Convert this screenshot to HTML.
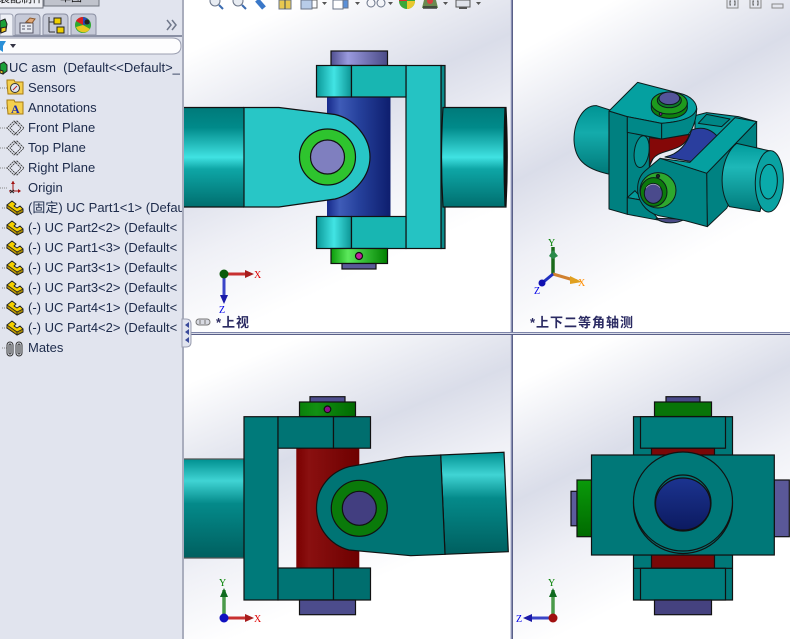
<!DOCTYPE html>
<html><head><meta charset="utf-8"><style>
html,body{margin:0;padding:0;width:790px;height:639px;overflow:hidden;background:#fff}
svg{display:block}
.t{font-family:"Liberation Sans","Noto Sans CJK SC",sans-serif;font-size:13px;fill:#1c2a4a}
.v{font-family:"Liberation Sans","Noto Sans CJK SC",sans-serif;font-size:13px;font-weight:700;fill:#2a2a62;letter-spacing:1px}
.a{font-family:"Liberation Serif",serif;font-size:10px}
</style></head><body>
<svg width="790" height="639" viewBox="0 0 790 639" xmlns="http://www.w3.org/2000/svg">
<defs>
<linearGradient id="bg" x1="0.1" y1="0" x2="0.55" y2="1"><stop offset="0.1" stop-color="#fff"/><stop offset="0.42" stop-color="#dadde9"/><stop offset="0.62" stop-color="#eff0f6"/><stop offset="0.85" stop-color="#fff"/></linearGradient>
<linearGradient id="cylH" x1="0" y1="0" x2="0" y2="1"><stop offset="0" stop-color="#007a7a"/><stop offset="0.2" stop-color="#008a8a"/><stop offset="0.5" stop-color="#40e2e2"/><stop offset="0.62" stop-color="#0ea6a6"/><stop offset="1" stop-color="#006e6e"/></linearGradient>
<linearGradient id="cylL" x1="0" y1="0" x2="0" y2="1"><stop offset="0" stop-color="#009090"/><stop offset="0.22" stop-color="#40d4d4"/><stop offset="0.45" stop-color="#048a8a"/><stop offset="1" stop-color="#005f5f"/></linearGradient>
<linearGradient id="armT" x1="0" y1="0" x2="1" y2="0"><stop offset="0" stop-color="#0a9898"/><stop offset="0.5" stop-color="#42e4e4"/><stop offset="1" stop-color="#0c9494"/></linearGradient>
<linearGradient id="blue" x1="0" y1="0" x2="1" y2="0"><stop offset="0" stop-color="#16298a"/><stop offset="0.2" stop-color="#3f5cb8"/><stop offset="0.5" stop-color="#26419c"/><stop offset="1" stop-color="#0e1e6e"/></linearGradient>
<linearGradient id="purp" x1="0" y1="0" x2="1" y2="0"><stop offset="0" stop-color="#4f4e8e"/><stop offset="0.3" stop-color="#9a9ade"/><stop offset="1" stop-color="#4a4a86"/></linearGradient>
<linearGradient id="grn" x1="0" y1="0" x2="1" y2="0"><stop offset="0" stop-color="#0a9a0a"/><stop offset="0.3" stop-color="#5ce85c"/><stop offset="1" stop-color="#008000"/></linearGradient>
<linearGradient id="grnD" x1="0" y1="0" x2="1" y2="0"><stop offset="0" stop-color="#0a800a"/><stop offset="0.3" stop-color="#129012"/><stop offset="1" stop-color="#006a00"/></linearGradient>
<linearGradient id="red" x1="0" y1="0" x2="1" y2="0"><stop offset="0" stop-color="#7a0000"/><stop offset="0.2" stop-color="#8a1010"/><stop offset="1" stop-color="#6e0000"/></linearGradient>
<linearGradient id="ball" x1="0" y1="0" x2="0" y2="1"><stop offset="0" stop-color="#1c3490"/><stop offset="1" stop-color="#0c1a60"/></linearGradient>
<linearGradient id="shaftR" x1="0" y1="0" x2="0" y2="1"><stop offset="0" stop-color="#009a9a"/><stop offset="0.35" stop-color="#1eb8b8"/><stop offset="1" stop-color="#007a7a"/></linearGradient>
<linearGradient id="shaftL" x1="0" y1="0" x2="0" y2="1"><stop offset="0" stop-color="#009494"/><stop offset="0.4" stop-color="#14abab"/><stop offset="1" stop-color="#007878"/></linearGradient>
<linearGradient id="gl" x1="0" y1="0" x2="0" y2="1"><stop offset="0" stop-color="#0a9a0a"/><stop offset="1" stop-color="#006a00"/></linearGradient>
<g id="part"><path d="M1 5 6 1 10 4 8 6 11 8 14 6 17 9 17 12 11 15 1 8Z" fill="#f4d000" stroke="#222" stroke-width="1" stroke-linejoin="round"/><path d="M1 5 11 12 11 15 1 8Z" fill="#c8a000" stroke="#222" stroke-width=".8"/><path d="M11 12 17 9 17 12 11 15Z" fill="#a88800" stroke="#222" stroke-width=".8"/></g>
<g id="plane"><path d="M8 0 15 7 8 14 1 7Z M5 0 12 7 5 14 -2 7Z" transform="translate(2 0)" fill="none" stroke="#333" stroke-width=".8" stroke-dasharray="2 .6"/></g>
</defs>

<!-- view backgrounds -->
<rect x="184" y="0" width="327" height="332" fill="url(#bg)"/>
<rect x="513" y="0" width="277" height="332" fill="url(#bg)"/>
<rect x="184" y="335" width="327" height="304" fill="url(#bg)"/>
<rect x="513" y="335" width="277" height="304" fill="url(#bg)"/>

<!-- splitters -->
<rect x="511" y="0" width="1" height="639" fill="#8a90b4"/><rect x="512" y="0" width="1" height="639" fill="#5a6088"/>
<rect x="510" y="0" width="1" height="639" fill="#d0d3e2"/>
<rect x="184" y="332" width="606" height="1" fill="#7f86aa"/><rect x="184" y="333" width="606" height="1" fill="#d8dbe8"/><rect x="184" y="334" width="606" height="1" fill="#5a6088"/>

<!-- toolbar icons -->
<g fill="none" stroke="#6a7488" stroke-width="1">
<circle cx="215" cy="1" r="5" fill="#e8ecf2"/><path d="M219 5 223 9" stroke="#3c6cb0" stroke-width="2"/>
<circle cx="238" cy="1" r="5" fill="#e8ecf2"/><path d="M242 5 246 9" stroke="#3c6cb0" stroke-width="2"/>
<path d="M257 0 264 8" stroke="#3a78c8" stroke-width="5"/>
<rect x="279" y="0" width="12" height="9" fill="#e8c850"/><path d="M285 0V9" stroke="#345"/>
<rect x="301" y="0" width="11" height="9" fill="#b8cce8"/><path d="M312 0h5v8h-5" stroke="#666"/>
<rect x="333" y="0" width="10" height="9" fill="#fff"/><rect x="343" y="0" width="5" height="8" fill="#5a90d8"/>
<circle cx="371" cy="3" r="4"/><circle cx="381" cy="3" r="4"/>
</g>
<circle cx="407" cy="1" r="8" fill="#3aa83a"/><path d="M407 1 399 1A8 8 0 0 1 407-7Z" fill="#d83030"/><path d="M407 1V9A8 8 0 0 0 415 1Z" fill="#e8c830"/>
<path d="M424 0h12l2 8h-16Z" fill="#6a8a50"/><path d="M423 6h14v3h-14Z" fill="#333" opacity=".7"/><circle cx="430" cy="1" r="3" fill="#d84040"/>
<rect x="456" y="0" width="14" height="7" fill="#dfe2ea" stroke="#555"/><path d="M459 8h8" stroke="#555" stroke-width="2"/>
<g fill="#555"><path d="M322 2h5l-2.500 3Z"/><path d="M355 2h5l-2.500 3Z"/><path d="M388 2h5l-2.500 3Z"/><path d="M443 2h5l-2.500 3Z"/><path d="M476 2h5l-2.500 3Z"/></g>
<g fill="#e4e6ee" stroke="#888"><rect x="727" y="-2" width="11" height="10"/><rect x="750" y="-2" width="11" height="10"/><rect x="772" y="4" width="11" height="4"/></g>
<path d="M731 1h-1v4h1M734 1h1v4h-1M754 1h-1v4h1M757 1h1v4h-1" stroke="#555" fill="none"/>

<!-- TOP VIEW -->
<g stroke="#111" stroke-width="1.2">
<rect x="331" y="51" width="56.500" height="14.500" fill="url(#purp)"/>
<rect x="327" y="97" width="63.500" height="119.500" fill="url(#blue)" stroke="none"/>
<rect x="184" y="107.500" width="60" height="99.500" fill="url(#cylH)" stroke="none"/><path d="M184 107.500H244M184 207H244" fill="none"/>
<rect x="441" y="65.500" width="4" height="183" fill="#0a8a8a"/>
<path d="M443 107.500H506Q508.500 157 506 207H443Q440 157 443 107.500Z" fill="url(#cylH)"/>
<path d="M505 108Q503 157 505 206Q508 157 505 108Z" fill="#111"/>
<rect x="406" y="65.500" width="35" height="183" fill="#25c3c3"/>
<rect x="316.500" y="65.500" width="35" height="31.500" fill="url(#armT)"/><rect x="351.500" y="65.500" width="54.500" height="31.500" fill="#18b6b2"/>
<rect x="316.500" y="216.500" width="35" height="32" fill="url(#armT)"/><rect x="351.500" y="216.500" width="54.500" height="32" fill="#18b6b2"/>
<path d="M244 107.500H279L335 114.500C355 119 370 138 370 157C370 176 355 194 335 199L279 207H244Z" fill="#28c6c6"/>
<circle cx="327.500" cy="157" r="28" fill="#2ec42e"/><circle cx="327.500" cy="157" r="17" fill="#7f7fbf"/>
<rect x="331" y="248.500" width="56.500" height="15" fill="url(#grn)"/>
<circle cx="359" cy="256" r="3.500" fill="#c020a0"/>
<rect x="342" y="263.500" width="34" height="5.500" fill="#5a5a98"/>
</g>
<!-- triad top -->
<path d="M224 274H250" stroke="#c83030" stroke-width="3"/><path d="M245 270 254 274 245 278Z" fill="#a81c1c"/>
<path d="M224 274V298" stroke="#3a44c8" stroke-width="3"/><path d="M220 295 224 304 228 295Z" fill="#1a1aa8"/>
<circle cx="224" cy="274" r="4.500" fill="#0a5a0a"/>
<text x="254" y="278" class="a" fill="#e00000">X</text><text x="219" y="313" class="a" fill="#0000e8">Z</text>
<text x="216" y="327" class="v">*上视</text>
<rect x="196" y="319" width="14" height="6" rx="3" fill="#d8dae2" stroke="#777"/><path d="M200 320v4M205 320v4" stroke="#777"/>

<!-- ISO VIEW -->
<g transform="translate(570 75) scale(.3333)" stroke="#0c1c1c" stroke-width="3" stroke-linejoin="round">
<!-- left shaft -->
<path d="M120 105 80 92C40 90 12 140 12 195C14 250 40 282 120 298Z" fill="url(#shaftL)"/>
<!-- far arm of right yoke -->
<path d="M375 122 410 113 505 125 560 140 540 200 430 290 375 250Z" fill="#05989a"/>
<path d="M385 145 410 118 480 132 455 155Z" fill="#008686"/>
<!-- interior of left yoke -->
<path d="M172 125 275 145 275 195 240 270 215 375 172 368Z" fill="#008484"/>
<ellipse cx="215" cy="230" rx="22" ry="48" transform="rotate(8 215 230)" fill="#059494"/>
<!-- blue and red -->
<path d="M285 246C325 238 352 208 365 165C400 152 430 165 448 192L378 262Z" fill="#2a3e9e"/>
<path d="M238 188 275 192 358 178C345 225 295 222 265 238C250 246 242 258 238 274Z" fill="#840808"/>
<!-- left front plate -->
<path d="M117 108 172 125 172 418 117 402Z" fill="#008080"/>
<!-- top surface of left yoke -->
<path d="M117 108 203 22 330 55C365 63 382 85 380 105C376 125 350 138 275 145L172 125Z" fill="#05a0a0"/>
<!-- top arm front + tongue side -->
<path d="M172 125 275 145 275 192 172 172Z" fill="#008888"/>
<path d="M275 145C340 140 376 125 380 100C380 130 368 165 355 178L275 192Z" fill="#008888"/>
<!-- bottom arm of left yoke -->
<path d="M172 368 195 347 220 376Z" fill="#059a9a"/>
<path d="M172 368 218 376 268 436 172 418Z" fill="#008484"/>
<!-- bottom pin -->
<path d="M258 430C280 448 320 448 345 432Z" fill="#4a4a86"/>
<!-- right block -->
<path d="M410 295 560 140 560 230 470 400 412 455Z" fill="#008282"/>
<path d="M270 250 360 262 495 128 560 140 410 295Z" fill="#05a0a0"/>
<path d="M232 282 270 250 410 295 412 455 345 437 265 422C225 410 200 375 203 335C205 310 215 295 232 282Z" fill="#008484"/>
<!-- lower green collar -->
<ellipse cx="264" cy="346" rx="54" ry="53" fill="#2ea82e"/>
<ellipse cx="251" cy="351" rx="40" ry="43" fill="#0c7a0c"/>
<ellipse cx="250" cy="355" rx="27" ry="30" fill="#4a4a8c"/>
<path d="M228 340A27 30 0 0 1 270 338" fill="none" stroke="#aab" stroke-width="2"/>
<circle cx="264" cy="303" r="5" fill="#222"/>
<!-- upper green collar -->
<path d="M244 84V100C246 118 272 130 298 130C325 130 350 118 352 100V84Z" fill="#0e800e"/>
<ellipse cx="298" cy="84" rx="54" ry="33" fill="#1d9a1d"/>
<ellipse cx="298" cy="76" rx="36" ry="22" fill="#0f7a2a"/>
<ellipse cx="298" cy="70" rx="31" ry="19" fill="#54549a"/>
<circle cx="272" cy="117" r="4" fill="#a020a0"/>
<!-- right shaft -->
<path d="M500 205C455 240 440 340 478 395L570 410 610 230Z" fill="url(#shaftR)"/>
<ellipse cx="598" cy="319" rx="42" ry="92" transform="rotate(2 598 319)" fill="#0aa2a2"/>
<ellipse cx="596" cy="320" rx="26" ry="52" transform="rotate(2 596 320)" fill="#0aaaaa"/>
</g>
<!-- triad iso -->
<path d="M553 275V247" stroke="#1a6a1a" stroke-width="3.500"/><path d="M549 256 553 250 558 256 553 259Z" fill="#2a8a4a"/>
<path d="M553 274 577 281" stroke="#d08030" stroke-width="3"/><path d="M570 276 582 282 570 284Z" fill="#e0a020"/>
<path d="M553 274 541 284" stroke="#2030c0" stroke-width="3"/><circle cx="542" cy="283" r="3.500" fill="#1010b0"/>
<text x="548" y="246" class="a" fill="#008000">Y</text><text x="578" y="286" class="a" fill="#ff8c00">X</text><text x="534" y="294" class="a" fill="#0000e8">Z</text>
<text x="530" y="327" class="v" style="letter-spacing:1px">*上下二等角轴测</text>

<!-- FRONT VIEW -->
<g stroke="#111" stroke-width="1.200">
<rect x="310" y="396.700" width="35" height="5.500" fill="#4e4e8e"/>
<rect x="299.500" y="402" width="56" height="14.500" fill="url(#grnD)"/>
<circle cx="327.500" cy="409.300" r="3.300" fill="#8a108a"/>
<rect x="296.300" y="448" width="63" height="120" fill="url(#red)" stroke="none"/>
<rect x="184" y="459" width="60" height="99" fill="url(#cylL)" stroke="none"/><path d="M184 459H244M184 558H244" fill="none" stroke="#555"/>
<rect x="244" y="416.700" width="34" height="183.300" fill="#007a7a"/>
<rect x="278" y="416.700" width="55.500" height="31.500" fill="#007474"/><rect x="333.500" y="416.700" width="37" height="31.500" fill="#006e6e"/>
<rect x="278" y="568" width="55.500" height="32" fill="#007474"/><rect x="333.500" y="568" width="37" height="32" fill="#006e6e"/>
<rect x="299.500" y="600" width="56" height="14.700" fill="#4c4c8c"/>
<path d="M440.700 455 504 452.300 508.300 551.700 445 554.300Z" fill="url(#cylL)"/>
<path d="M349 466.700 405.700 456.700 440.700 455 445 554.300 410.700 555.700 349 550C330 545 316.500 528 316.500 508C316.500 488 330 472 349 466.700Z" fill="#007474"/>
<circle cx="359.300" cy="508.300" r="28" fill="#0a7a0a"/><circle cx="359.300" cy="508.300" r="17" fill="#423e80"/>
</g>
<!-- triad front -->
<path d="M224 617V590" stroke="#4a9a4a" stroke-width="3.500"/><path d="M220 597 224 588 228 597Z" fill="#0f6a1f"/>
<path d="M224 618H250" stroke="#c83030" stroke-width="3"/><path d="M245 614 254 618 245 622Z" fill="#a81c1c"/>
<circle cx="224" cy="618" r="4.500" fill="#1010c0"/>
<text x="219" y="586" class="a" fill="#008000">Y</text><text x="254" y="622" class="a" fill="#e00000">X</text>

<!-- RIGHT VIEW -->
<g stroke="#111" stroke-width="1.200">
<rect x="666" y="396.700" width="34" height="5.500" fill="#4a4a8a"/>
<rect x="654.500" y="402" width="57" height="14.500" fill="#087408"/>
<rect x="633.500" y="416.700" width="99" height="38.500" fill="#007878"/>
<rect x="640.500" y="416.700" width="85" height="31.500" fill="#007c7c"/>
<rect x="651.500" y="448.300" width="63" height="7" fill="#7a0808"/>
<rect x="633.500" y="555" width="99" height="45" fill="#007878"/>
<rect x="651.500" y="555" width="63" height="13.300" fill="#7a0808"/>
<path d="M633.500 568.300H732.500" fill="none"/>
<rect x="640.500" y="568.300" width="85" height="31.700" fill="#007c7c"/>
<rect x="654.500" y="600" width="57" height="14.700" fill="#45427f"/>
<rect x="571" y="491.300" width="6" height="34.500" fill="#5c5c9c"/>
<rect x="577" y="480" width="14.500" height="56.700" fill="url(#gl)"/>
<rect x="774.300" y="480" width="15" height="56.700" fill="#5a5898"/>
<rect x="591.500" y="455" width="182.800" height="100" fill="#007878"/>
<ellipse cx="683" cy="503.500" rx="49.500" ry="50" fill="none"/>
<ellipse cx="683" cy="501.500" rx="49.500" ry="49.500" fill="#007878"/>
<circle cx="683" cy="503" r="28" fill="#007878"/>
<ellipse cx="683" cy="504" rx="27.500" ry="26" fill="url(#ball)"/>
</g>
<!-- triad right -->
<path d="M553 617V590" stroke="#4a9a4a" stroke-width="3.500"/><path d="M549 597 553 588 557 597Z" fill="#0f6a1f"/>
<path d="M553 618H527" stroke="#3a44c8" stroke-width="3"/><path d="M532 614 523 618 532 622Z" fill="#1a1aa8"/>
<circle cx="553" cy="618" r="4.500" fill="#a01010"/>
<text x="548" y="586" class="a" fill="#008000">Y</text><text x="516" y="622" class="a" fill="#0000e8">Z</text>

<!-- LEFT PANEL -->
<rect x="0" y="0" width="182" height="639" fill="#e1e4ee"/>
<rect x="182" y="0" width="2" height="639" fill="#a9adbd"/>
<!-- sash handle -->
<path d="M182 319H186Q191 319 191 324V342Q191 347 186 347H182Z" fill="#e1e4ee" stroke="#9a9eb0"/>
<path d="M189 322 185 325 189 328ZM189 329 185 332 189 335ZM189 337 185 340 189 343Z" fill="#3a4a9a"/>
<!-- top tabs -->
<rect x="-2" y="-6" width="45" height="14" fill="#eff0f5" stroke="#70747e"/>
<rect x="44" y="-6" width="55" height="12" fill="#c0c3cc" stroke="#70747e"/>
<text x="-1" y="2" font-family="'Noto Sans CJK SC',sans-serif" font-size="11" fill="#111">装配制件</text>
<text x="60" y="1" font-family="'Noto Sans CJK SC',sans-serif" font-size="11" fill="#111">草图</text>
<!-- icon tabs -->
<rect x="0" y="35" width="182" height="2" fill="#8a90a4"/>
<path d="M0 14H10Q13 14 13 17V36H0Z" fill="#eef0f6" stroke="#9ba0b2"/>
<path d="M15 35V18Q15 14 19 14H36Q40 14 40 18V35Z" fill="#c6cad8" stroke="#8a8fa2"/>
<path d="M43 35V18Q43 14 47 14H64Q68 14 68 18V35Z" fill="#c6cad8" stroke="#8a8fa2"/>
<path d="M71 35V18Q71 14 75 14H92Q96 14 96 18V35Z" fill="#c6cad8" stroke="#8a8fa2"/>
<path d="M0 21 5 19 7 24 6 30 0 32Z" fill="#1aa03a" stroke="#222"/><path d="M1 28 6 27 6 31 1 33Z" fill="#f0c820" stroke="#222"/>
<rect x="20" y="23" width="13" height="10" fill="#e8ebf2" stroke="#556"/><path d="M22 26h3M27 26h4M22 29h3M27 29h4" stroke="#556"/><path d="M26 22 30 18 35 19 32 23Z" fill="#e0a878" stroke="#8a5a30"/>
<path d="M49 17V32M49 22H54M49 32H55" fill="none" stroke="#333"/><rect x="54" y="18" width="7" height="6" fill="#f0d000" stroke="#222"/><rect x="57" y="27" width="7" height="6" fill="#f0d000" stroke="#222"/>
<circle cx="83" cy="25" r="8" fill="#2ea82e"/><path d="M83 25 76 21A8 8 0 0 1 83 17Z" fill="#d82020"/><path d="M76 27A8 8 0 0 0 90 29L83 25Z" fill="#e8c820"/><path d="M83 17A8 8 0 0 1 90 24L83 25Z" fill="#2a48b8"/><circle cx="87" cy="22" r="2.500" fill="#222"/>
<path d="M167 20 171 25 167 30M172 20 176 25 172 30" fill="none" stroke="#70788a" stroke-width="1.500"/>
<!-- filter -->
<path d="M-2 38H172Q181 38 181 46Q181 54 172 54H-2Z" fill="#fdfdfe" stroke="#9a9eb0"/>
<path d="M0 41H6L3 46V52L0 50Z" fill="#2a8fd8"/><path d="M10 44h6l-3 4Z" fill="#334"/>

<!-- tree lines -->
<g stroke="#888" stroke-dasharray="1 1"><path d="M0 88H7M0 128H7M0 148H7M0 168H7M0 188H7M2 208H7M2 228H7M2 248H7M2 268H7M2 288H7M2 308H7M2 328H7M2 348H7M2 108H7"/></g>
<!-- tree icons -->
<path d="M0 64 4 62 7 65 7 71 3 74 0 72Z" fill="#1aa03a" stroke="#222"/><path d="M0 70 3 71 3 74 0 73Z" fill="#e8c020" stroke="#222"/>
<g>
<path d="M7 83V80H14L15 82H23V94H8Z" fill="#f4d050" stroke="#a87a10"/><circle cx="15" cy="88" r="4.500" fill="#dde4f0" stroke="#333"/><path d="M13 90 17 86" stroke="#c02020"/>
<path d="M7 103V100H14L15 102H23V114H8Z" fill="#f4d050" stroke="#a87a10"/><text x="11" y="113" font-family="'Liberation Serif',serif" font-weight="700" font-size="12" fill="#1a2ab0">A</text>
</g>
<use href="#plane" x="7" y="121"/><use href="#plane" x="7" y="141"/><use href="#plane" x="7" y="161"/>
<path d="M13 181V191M9 191H20" stroke="#a01010" fill="none"/><path d="M11 184 13 181 15 184ZM18 189 21 191 18 193Z" fill="#a01010"/><path d="M10 190l4 3M14 190l-4 3" stroke="#222"/>
<use href="#part" x="6" y="200"/><use href="#part" x="6" y="220"/><use href="#part" x="6" y="240"/><use href="#part" x="6" y="260"/><use href="#part" x="6" y="280"/><use href="#part" x="6" y="300"/><use href="#part" x="6" y="320"/>
<g fill="none" stroke="#333"><rect x="7" y="342" width="6" height="14" rx="3"/><rect x="9" y="344" width="2" height="10" rx="1"/><rect x="16" y="342" width="6" height="14" rx="3"/><rect x="18" y="344" width="2" height="10" rx="1"/></g>
<!-- tree text -->
<svg x="0" y="0" width="182" height="639">
<text x="9" y="72" class="t">UC asm &#160;(Default&lt;&lt;Default&gt;_</text>
<text x="28" y="92" class="t">Sensors</text>
<text x="28" y="112" class="t">Annotations</text>
<text x="28" y="132" class="t">Front Plane</text>
<text x="28" y="152" class="t">Top Plane</text>
<text x="28" y="172" class="t">Right Plane</text>
<text x="28" y="192" class="t">Origin</text>
<text x="28" y="212" class="t">(固定) UC Part1&lt;1&gt; (Default</text>
<text x="28" y="232" class="t">(-) UC Part2&lt;2&gt; (Default&lt;</text>
<text x="28" y="252" class="t">(-) UC Part1&lt;3&gt; (Default&lt;</text>
<text x="28" y="272" class="t">(-) UC Part3&lt;1&gt; (Default&lt;</text>
<text x="28" y="292" class="t">(-) UC Part3&lt;2&gt; (Default&lt;</text>
<text x="28" y="312" class="t">(-) UC Part4&lt;1&gt; (Default&lt;</text>
<text x="28" y="332" class="t">(-) UC Part4&lt;2&gt; (Default&lt;</text>
<text x="28" y="352" class="t">Mates</text>
</svg>
</svg>
</body></html>
